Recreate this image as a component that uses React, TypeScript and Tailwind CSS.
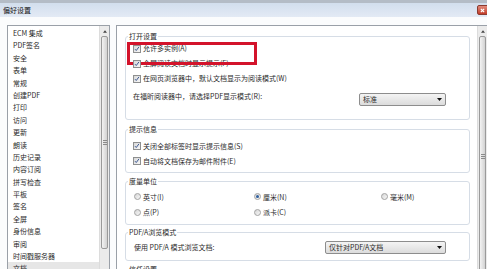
const listItems = [
  "ECM 集成", "PDF签名", "安全", "表单", "常规", "创建PDF", "打印", "访问", "更新", "朗读",
  "历史记录", "内容订阅", "拼写检查", "平板", "签名", "全屏", "身份信息", "审阅", "时间戳服务器", "文档",
];

function Check({ label }: { label: string }) {
  return (
    <div className="flex items-center h-[15px] gap-[2px]">
      <span className="relative w-[8px] h-[8px] border border-[#8e8f8f] bg-gradient-to-br from-[#d8d8d8] to-[#f7f7f7] shrink-0">
        <svg viewBox="0 0 8 8" className="absolute inset-0 w-full h-full">
          <path d="M1.3 4.2 L3 6 L6.6 1.2" fill="none" stroke="#3a5690" strokeWidth="1.3" />
        </svg>
      </span>
      <span>{label}</span>
    </div>
  );
}

function Radio({ label, on }: { label: string; on?: boolean }) {
  return (
    <div className="flex items-center h-[15.5px] gap-[2px]">
      <span className="flex items-center justify-center w-[7px] h-[7px] rounded-full border border-[#a2a2a2] bg-gradient-to-br from-[#d6d6d6] to-[#f8f8f8] shrink-0">
        {on && <span className="w-[3px] h-[3px] rounded-full bg-[#2f5f9e]" />}
      </span>
      <span>{label}</span>
    </div>
  );
}

function Select({ value, width }: { value: string; width: string }) {
  return (
    <div className={`${width} h-[13px] flex items-center justify-between border border-[#8d8d8d] rounded-[2px] bg-gradient-to-b from-[#f4f4f4] to-[#dcdcdc] pl-[3px] pr-[3px]`}>
      <span>{value}</span>
      <svg viewBox="0 0 5 3" className="w-[5px] h-[3px]">
        <path d="M0 0 H5 L2.5 3 Z" fill="#111" />
      </svg>
    </div>
  );
}

function Scrollbar({ grip }: { grip: string }) {
  return (
    <div className="w-full h-full bg-[#ebebeb] border-l border-[#dcdcdc] flex flex-col">
      <div className="h-[10px] flex items-center justify-center">
        <svg viewBox="0 0 5 3" className="w-[4px] h-[3px]">
          <path d="M0 3 H5 L2.5 0 Z" fill="#444" />
        </svg>
      </div>
      <div className={`${grip} mx-[1px] rounded-[2px] border border-[#9a9a9a] bg-gradient-to-r from-[#f3f3f3] to-[#d2d2d2] flex items-center justify-center`}>
        <div className="flex flex-col gap-[1px]">
          <span className="w-[4px] h-px bg-[#8a8a8a]" />
          <span className="w-[4px] h-px bg-[#8a8a8a]" />
          <span className="w-[4px] h-px bg-[#8a8a8a]" />
        </div>
      </div>
    </div>
  );
}

function Group({ title, className, children }: { title: string; className: string; children: React.ReactNode }) {
  return (
    <fieldset className={`relative border border-[#d6dde6] rounded-[3px] ${className}`}>
      <legend className="ml-[2px] px-[1px] leading-[9px]">{title}</legend>
      {children}
    </fieldset>
  );
}

export default function App() {
  return (
    <div className="w-[487px] h-[269px] overflow-hidden bg-white flex flex-col text-[7px] text-[#2a2a2a] font-['Noto_Sans_CJK_SC','Liberation_Sans',sans-serif]">
      <div className="h-[17px] shrink-0 border-t-[3px] border-[#b4bcc6] bg-gradient-to-b from-[#d2deed] to-[#e3eaf5] flex items-center justify-between overflow-hidden">
        <span className="pl-[3px] text-[#111]">偏好设置</span>
        <div className="w-[14px] h-[10px] -mr-[4px] rounded-[2px] bg-gradient-to-b from-[#e08a7c] to-[#c23a26] border border-[#8a3a30] flex items-center pl-[2px]">
          <svg viewBox="0 0 6 6" className="w-[5px] h-[5px]">
            <path d="M1 1 L5 5 M5 1 L1 5" stroke="#fff" strokeWidth="1.4" />
          </svg>
        </div>
      </div>

      <div className="flex-1 flex pt-[8px] bg-[#fbfcfd] min-h-0">
        <div className="ml-[7px] w-[103px] border border-[#9aa0a8] bg-white flex shrink-0 h-[260px]">
          <div className="flex-1 pt-[1px]">
            {listItems.map((it, i) => (
              <div
                key={it}
                className={`h-[12.4px] leading-[12.4px] pl-[5px] ${i === listItems.length - 1 ? "bg-[#e6e6e6]" : ""}`}
              >
                {it}
              </div>
            ))}
          </div>
          <div className="w-[10px]">
            <Scrollbar grip="h-[213px]" />
          </div>
        </div>

        <div className="ml-[6px] flex-1 border-l border-t border-[#9aa0a8] bg-white flex h-[260px]">
          <div className="flex-1 pl-[8px] pr-[7px] pt-[6px]">
            <Group title="打开设置" className="pb-[13px]">
              <div className="absolute left-[1px] top-[1px] w-[130px] h-[23px] border-[3px] border-[#d3132b]" />
              <div className="pl-[7px]">
                <Check label="允许多实例(A)" />
                <Check label="全屏阅读文档时显示提示(F)" />
                <Check label="在网页浏览器中，默认文档显示为阅读模式(W)" />
                <div className="flex items-start justify-between mt-[7px] pr-[23px]">
                  <span className="leading-[6px] pt-[0px]">在福昕阅读器中，请选择PDF显示模式(R):</span>
                  <Select value="标准" width="w-[87px]" />
                </div>
              </div>
            </Group>

            <Group title="提示信息" className="mt-[5px] pt-[4.5px] pb-[3px]">
              <div className="pl-[7px]">
                <Check label="关闭全部标签时显示提示信息(S)" />
                <Check label="自动将文档保存为邮件附件(E)" />
              </div>
            </Group>

            <Group title="度量单位" className="mt-[4.5px] pt-[3px] pb-[4px]">
              <div className="pl-[8px] grid grid-cols-[120px_127px_1fr]">
                <Radio label="英寸(I)" />
                <Radio label="厘米(N)" on />
                <Radio label="毫米(M)" />
                <Radio label="点(P)" />
                <Radio label="派卡(C)" />
              </div>
            </Group>

            <Group title="PDF/A浏览模式" className="mt-[2.5px] pt-[4.4px] pb-[6.5px]">
              <div className="pl-[8px] pr-[23px] flex items-center justify-between">
                <span>使用 PDF/A 模式浏览文档:</span>
                <Select value="仅针对PDF/A文档" width="w-[121px]" />
              </div>
            </Group>

            <Group title="信任设置" className="mt-[3.5px] h-[20px]">
              <div />
            </Group>
          </div>
          <div className="w-[10px]">
            <Scrollbar grip="h-[240px]" />
          </div>
        </div>
      </div>
    </div>
  );
}
